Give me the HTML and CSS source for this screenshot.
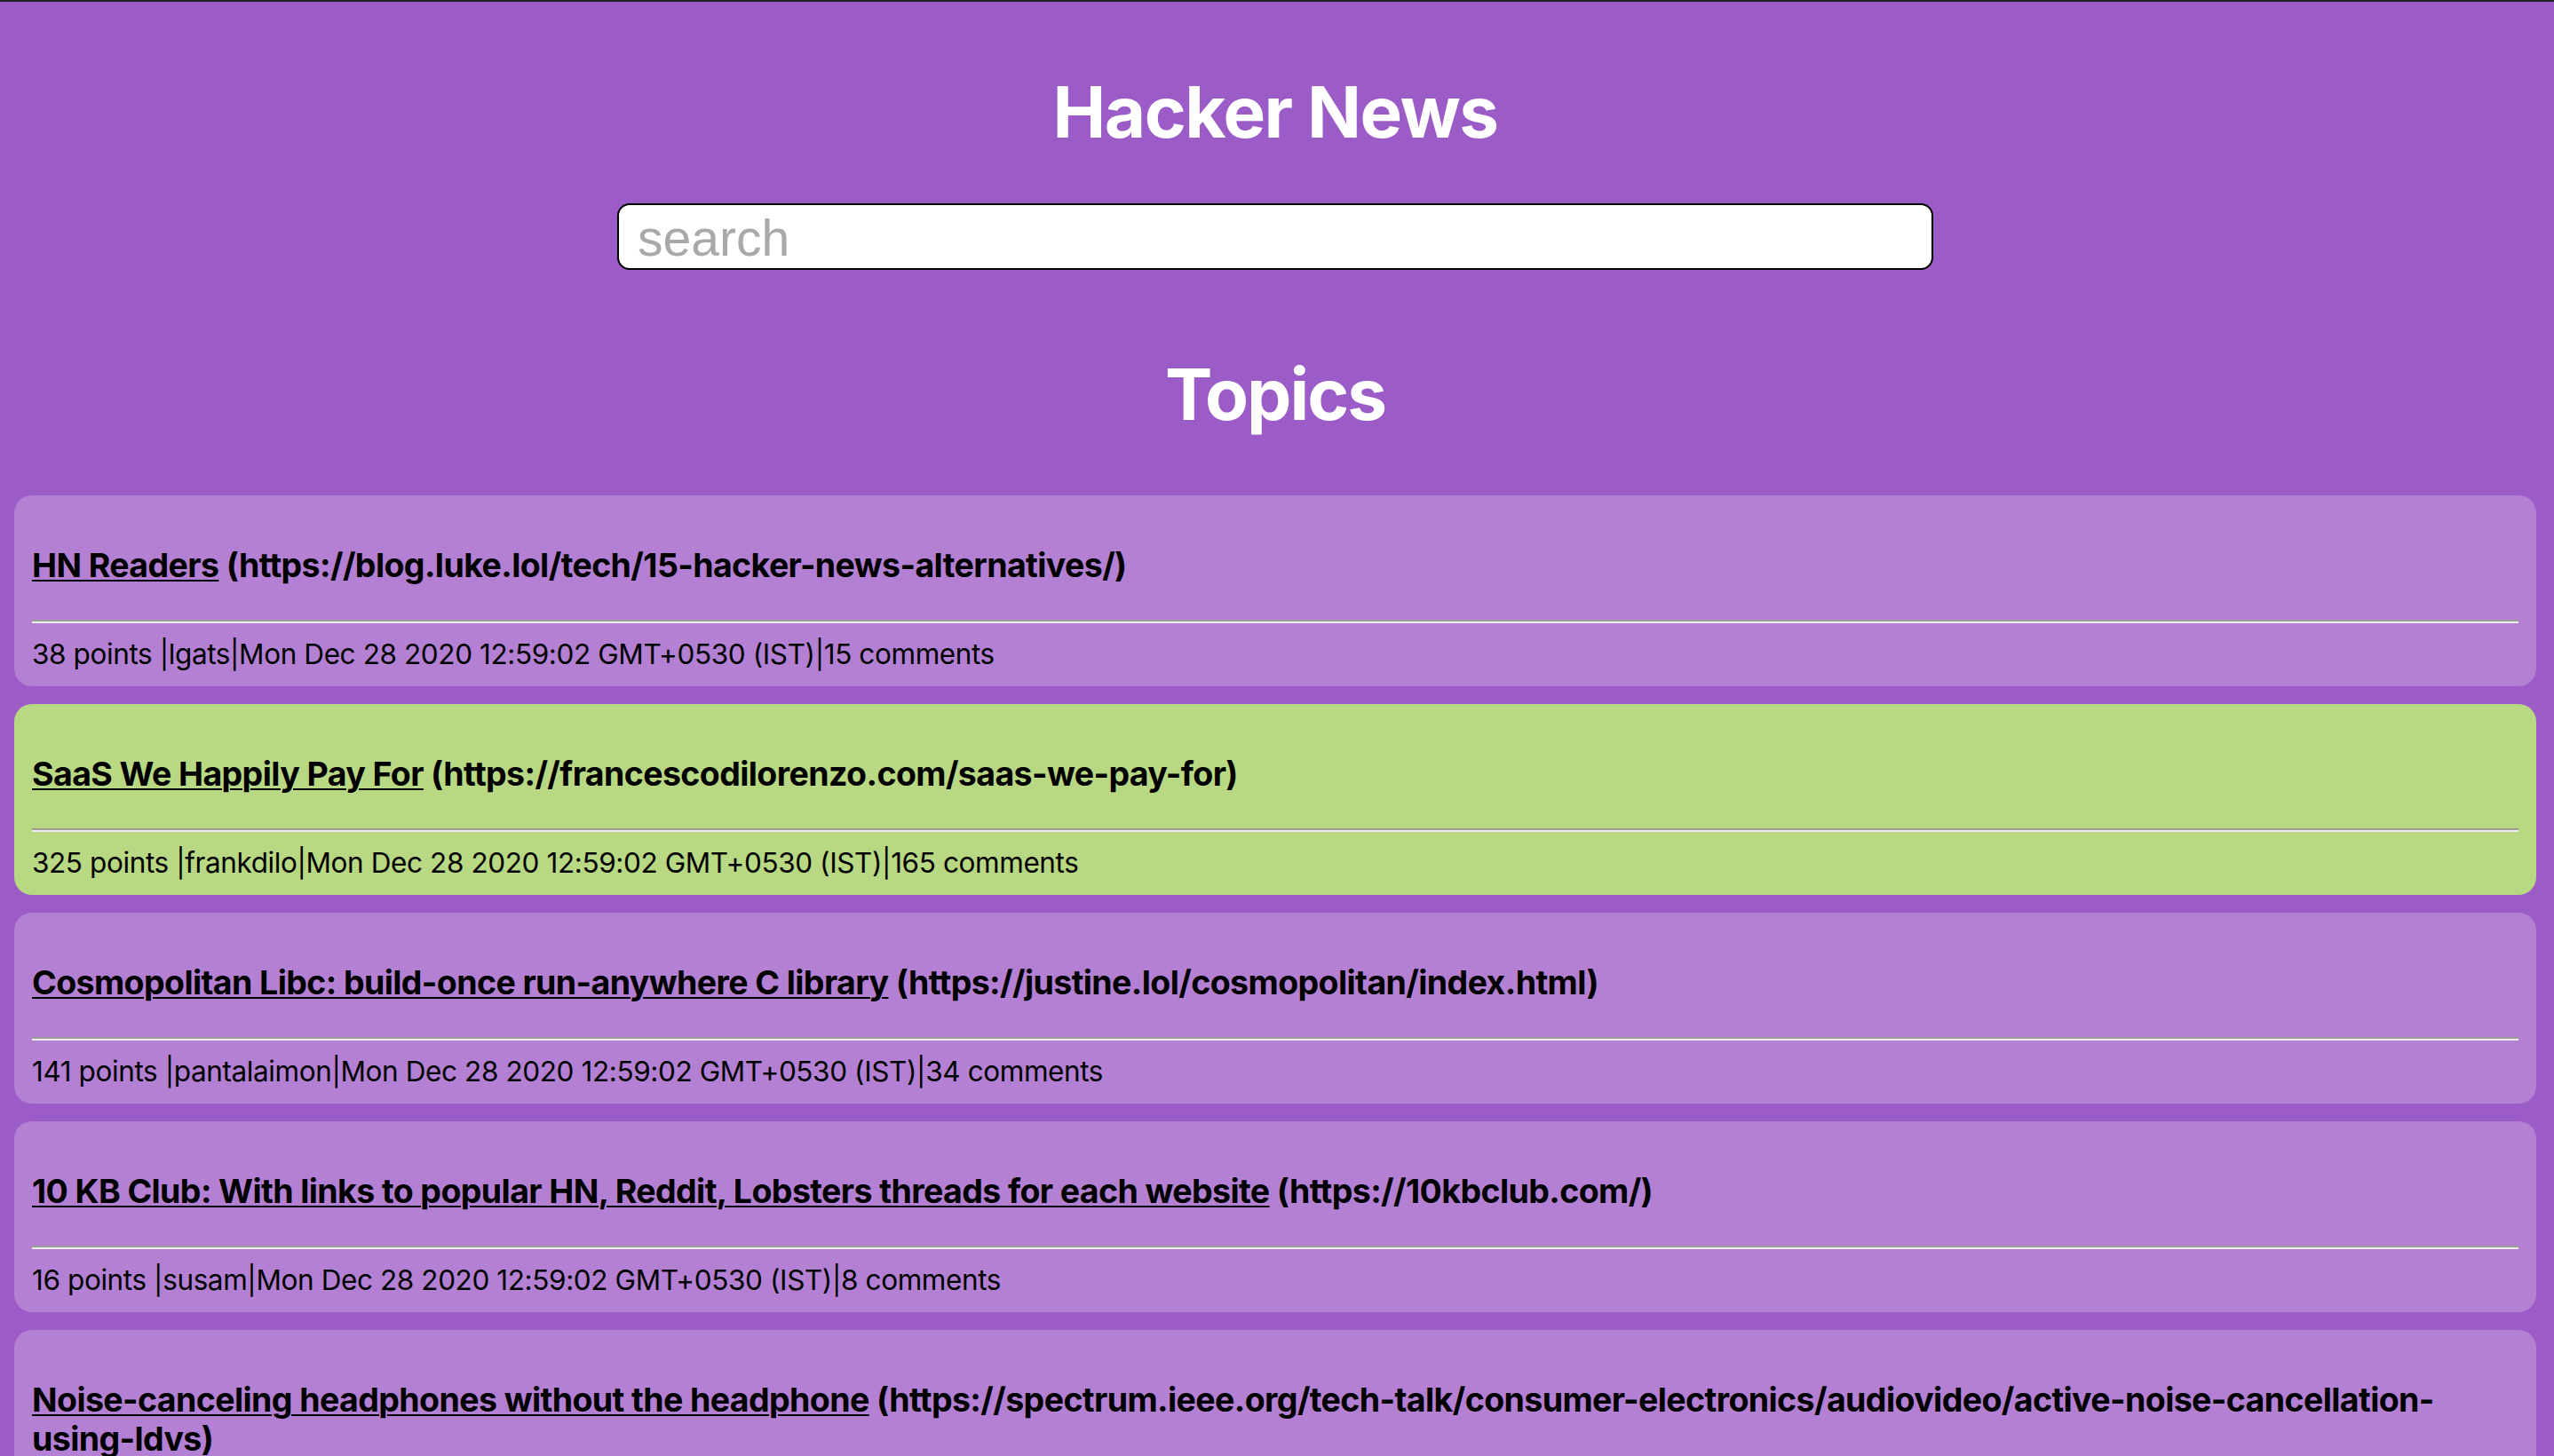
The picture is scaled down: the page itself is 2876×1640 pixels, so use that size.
FILE: index.html
```html
<!DOCTYPE html>
<html lang="en">
<head>
<meta charset="utf-8">
<title>Hacker News</title>
<link rel="stylesheet" href="styles.css">
</head>
<body>
<header class="header">
  <h1 class="page-title">Hacker News</h1>
  <input class="search" type="text" placeholder="search">
  <h1 class="section-title">Topics</h1>
</header>
<main class="topics">
  <article class="topic">
    <h3 class="topic-title"><a href="#">HN Readers</a> (https://blog.luke.lol/tech/15-hacker-news-alternatives/)</h3>
    <hr class="divider">
    <p class="meta">38 points |lgats|Mon Dec 28 2020 12:59:02 GMT+0530 (IST)|15 comments</p>
  </article>
  <article class="topic topic--hot">
    <h3 class="topic-title"><a href="#">SaaS We Happily Pay For</a> (https://francescodilorenzo.com/saas-we-pay-for)</h3>
    <hr class="divider">
    <p class="meta">325 points |frankdilo|Mon Dec 28 2020 12:59:02 GMT+0530 (IST)|165 comments</p>
  </article>
  <article class="topic">
    <h3 class="topic-title"><a href="#">Cosmopolitan Libc: build-once run-anywhere C library</a> (https://justine.lol/cosmopolitan/index.html)</h3>
    <hr class="divider">
    <p class="meta">141 points |pantalaimon|Mon Dec 28 2020 12:59:02 GMT+0530 (IST)|34 comments</p>
  </article>
  <article class="topic">
    <h3 class="topic-title"><a href="#">10 KB Club: With links to popular HN, Reddit, Lobsters threads for each website</a> (https://10kbclub.com/)</h3>
    <hr class="divider">
    <p class="meta">16 points |susam|Mon Dec 28 2020 12:59:02 GMT+0530 (IST)|8 comments</p>
  </article>
  <article class="topic">
    <h3 class="topic-title"><a href="#">Noise-canceling headphones without the headphone</a> (https://spectrum.ieee.org/tech-talk/consumer-electronics/audiovideo/active-noise-cancellation-using-ldvs)</h3>
    <hr class="divider">
    <p class="meta">52 points |pseudolus|Mon Dec 28 2020 12:59:02 GMT+0530 (IST)|21 comments</p>
  </article>
</main>
</body>
</html>
```
FILE: styles.css
```css
html {
  background: #9c5cc7;
}
body {
  margin: 0;
  padding: 0 20px 40px 16px;
  border-top: 2px solid #231f26;
  background: #9c5cc7;
  font-family: Inter, "Noto Sans", sans-serif;
  color: #000;
}
.header {
  display: flex;
  flex-direction: column;
  align-items: center;
}
.page-title,
.section-title {
  margin: 0;
  font-size: 80px;
  line-height: 96px;
  font-weight: 700;
  color: #fff;
  letter-spacing: -1.5px;
}
.page-title {
  margin-top: 76px;
}
.search {
  margin-top: 55px;
  width: 1482px;
  height: 75px;
  box-sizing: border-box;
  padding: 3px 21px 0;
  border: 2px solid #000;
  border-radius: 14px;
  background: #fff;
  font-family: "Liberation Sans", Arial, sans-serif;
  font-size: 57px;
  outline: none;
}
.search::placeholder {
  color: #a9a9a9;
}
.section-title {
  margin-top: 92px;
  letter-spacing: -2px;
}
.topics {
  margin-top: 66px;
  display: flex;
  flex-direction: column;
  gap: 20px;
}
.topic {
  background: #b380d3;
  border-radius: 20px;
  padding: 57px 20px 13px;
  min-height: 215px;
  box-sizing: border-box;
}
.topic--hot {
  background: #b8d884;
}
.topic-title {
  margin: 0;
  font-size: 37.5px;
  line-height: 44px;
  font-weight: 700;
  letter-spacing: -0.6px;
}
.topic-title a {
  color: #000;
  text-decoration: underline;
  text-decoration-thickness: 2px;
  text-underline-offset: 3px;
}
.divider {
  margin: 39px 0 12px;
  border: 0;
  border-top: 2px solid #9a9a9a;
  border-bottom: 2px solid #eeeeee;
  height: 0;
}
.meta {
  margin: 0;
  font-size: 31.5px;
  line-height: 46px;
  letter-spacing: -0.4px;
}
```
